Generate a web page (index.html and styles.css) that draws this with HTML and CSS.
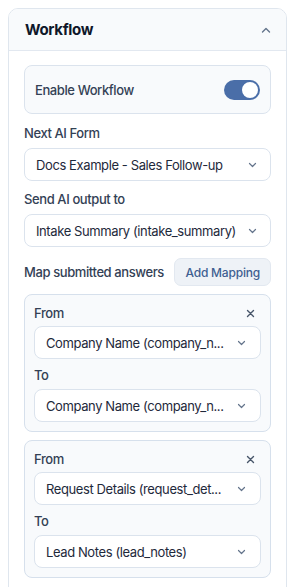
FILE: index.html
```html
<!DOCTYPE html>
<html lang="en">
  <head>
    <meta charset="UTF-8" />
    <meta name="viewport" content="width=device-width, initial-scale=1.0" />
    <title>Workflow</title>
    <link rel="stylesheet" href="styles.css">
  </head>
  <body>
    <div class="panel">
      <div class="panel-header">
        <h2>Workflow</h2>
        <svg class="collapse" width="10" height="6" viewBox="0 0 10 6"><path d="M1.5 5 L5 1.5 L8.5 5" fill="none" stroke="#64748b" stroke-width="1.4" stroke-linecap="round" stroke-linejoin="round"/></svg>
      </div>

      <div class="panel-body">
        <div class="enable-box">
          <span>Enable Workflow</span>
          <div class="toggle on"><div class="knob"></div></div>
        </div>

        <label class="field-label first">Next AI Form</label>
        <div class="select">
          <span>Docs Example - Sales Follow-up</span>
          <svg width="9" height="6" viewBox="0 0 9 6"><path d="M1.5 1.5 L4.5 4.5 L7.5 1.5" fill="none" stroke="#64748b" stroke-width="1.2" stroke-linecap="round" stroke-linejoin="round"/></svg>
        </div>

        <label class="field-label">Send AI output to</label>
        <div class="select">
          <span>Intake Summary (intake_summary)</span>
          <svg width="9" height="6" viewBox="0 0 9 6"><path d="M1.5 1.5 L4.5 4.5 L7.5 1.5" fill="none" stroke="#64748b" stroke-width="1.2" stroke-linecap="round" stroke-linejoin="round"/></svg>
        </div>

        <div class="map-row">
          <span>Map submitted answers</span>
          <button class="add-btn">Add Mapping</button>
        </div>

        <div class="mapping">
          <div class="mapping-top">
            <span class="sub-label">From</span>
            <svg class="remove" width="9" height="9" viewBox="0 0 9 9"><path d="M1.5 1.5 L7.5 7.5 M7.5 1.5 L1.5 7.5" stroke="#475569" stroke-width="1.4" stroke-linecap="round"/></svg>
          </div>
          <div class="select">
            <span>Company Name (company_n...</span>
            <svg width="9" height="6" viewBox="0 0 9 6"><path d="M1.5 1.5 L4.5 4.5 L7.5 1.5" fill="none" stroke="#64748b" stroke-width="1.2" stroke-linecap="round" stroke-linejoin="round"/></svg>
          </div>
          <span class="sub-label to">To</span>
          <div class="select">
            <span>Company Name (company_n...</span>
            <svg width="9" height="6" viewBox="0 0 9 6"><path d="M1.5 1.5 L4.5 4.5 L7.5 1.5" fill="none" stroke="#64748b" stroke-width="1.2" stroke-linecap="round" stroke-linejoin="round"/></svg>
          </div>
        </div>

        <div class="mapping">
          <div class="mapping-top">
            <span class="sub-label">From</span>
            <svg class="remove" width="9" height="9" viewBox="0 0 9 9"><path d="M1.5 1.5 L7.5 7.5 M7.5 1.5 L1.5 7.5" stroke="#475569" stroke-width="1.4" stroke-linecap="round"/></svg>
          </div>
          <div class="select">
            <span>Request Details (request_det...</span>
            <svg width="9" height="6" viewBox="0 0 9 6"><path d="M1.5 1.5 L4.5 4.5 L7.5 1.5" fill="none" stroke="#64748b" stroke-width="1.2" stroke-linecap="round" stroke-linejoin="round"/></svg>
          </div>
          <span class="sub-label to">To</span>
          <div class="select">
            <span>Lead Notes (lead_notes)</span>
            <svg width="9" height="6" viewBox="0 0 9 6"><path d="M1.5 1.5 L4.5 4.5 L7.5 1.5" fill="none" stroke="#64748b" stroke-width="1.2" stroke-linecap="round" stroke-linejoin="round"/></svg>
          </div>
        </div>
      </div>
    </div>
  </body>
</html>
```

FILE: styles.css
```css
* {
  margin: 0;
  padding: 0;
  box-sizing: border-box;
  font-family: "Inter", sans-serif;
  letter-spacing: -0.4px;
}
body {
  background-color: #fff;
  color: #1e293b;
  padding: 8px;
  height: 100vh;
  overflow: hidden;
}
.panel {
  border: 1px solid #dfe6ee;
  border-radius: 10px;
  overflow: hidden;
  height: 620px;
}
.panel-header {
  display: flex;
  align-items: center;
  justify-content: space-between;
  height: 42px;
  padding: 0 16px;
  background-color: #f8fafc;
  border-bottom: 1px solid #e2e8f0;
}
.panel-header h2 {
  font-size: 15px;
  font-weight: 700;
  color: #0f172a;
  letter-spacing: -0.35px;
}
.collapse {
  margin-right: -1px;
}
.panel-body {
  padding: 14px 15px;
}
.enable-box {
  display: flex;
  align-items: center;
  justify-content: space-between;
  height: 49px;
  padding: 0 10px;
  background-color: #f8fafc;
  border: 1px solid #dbe3ed;
  border-radius: 8px;
  font-size: 13px;
  font-weight: 500;
  color: #334155;
}
.toggle {
  width: 36px;
  height: 20px;
  border-radius: 10px;
  background-color: #4a6ea8;
  position: relative;
}
.toggle .knob {
  position: absolute;
  top: 2px;
  right: 2px;
  width: 16px;
  height: 16px;
  border-radius: 50%;
  background: #fff;
}
.field-label {
  display: block;
  margin-top: 9px;
  margin-bottom: 6px;
  font-size: 13px;
  line-height: 18px;
  font-weight: 500;
  color: #334155;
}
.field-label.first {
  margin-top: 10px;
}
.select {
  display: flex;
  align-items: center;
  justify-content: space-between;
  height: 33px;
  padding: 0 13px 0 11px;
  background: #fff;
  border: 1px solid #dbe3ed;
  border-radius: 8px;
  font-size: 13px;
  color: #1e293b;
  white-space: nowrap;
}
.map-row {
  display: flex;
  align-items: center;
  justify-content: space-between;
  margin-top: 11px;
  font-size: 13px;
  font-weight: 500;
  color: #334155;
  white-space: nowrap;
}
.add-btn {
  height: 28px;
  padding: 0 10px;
  background: #eef2f7;
  border: 1px solid #e2e8f0;
  border-radius: 7px;
  color: #3f5f91;
  font-size: 12px;
  font-weight: 500;
  white-space: nowrap;
  letter-spacing: -0.2px;
}
.mapping {
  margin-top: 8px;
  padding: 9px;
  background: #f8fafc;
  border: 1px solid #d6e0ec;
  border-radius: 8px;
}
.mapping-top {
  display: flex;
  align-items: center;
  justify-content: space-between;
  padding-right: 6px;
  margin-bottom: 4px;
}
.sub-label {
  display: block;
  font-size: 13px;
  line-height: 18px;
  font-weight: 500;
  color: #334155;
}
.sub-label.to {
  margin-top: 7px;
  margin-bottom: 5px;
}
.mapping .select {
  padding-left: 11px;
  padding-right: 14px;
}
```
